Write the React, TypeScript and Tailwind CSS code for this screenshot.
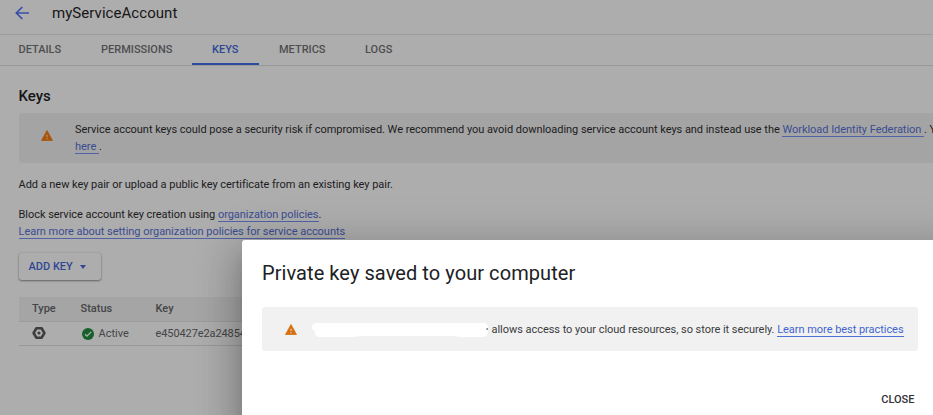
import React from "react";

const tabs = [
  { label: "DETAILS", box: "w-[82px] pl-[18.5px]" },
  { label: "PERMISSIONS", box: "w-[110px] pl-[19px]" },
  { label: "KEYS", box: "w-[67px] pl-[20px]", active: true },
  { label: "METRICS", box: "w-[86px] pl-[20px]" },
  { label: "LOGS", box: "w-[80px] pl-[20px]" },
];

function Warning({ className, mark }: { className: string; mark: string }) {
  return (
    <svg viewBox="1 2 22 19" preserveAspectRatio="none" className={`shrink-0 ${className}`}>
      <path fill="currentColor" stroke="currentColor" strokeLinejoin="round" d="M1.6 20.5h20.8L12 2.6z" />
      <path fill={mark} d="M11 16h2v2h-2zM11 10h2v4h-2z" />
    </svg>
  );
}

function Link({ children }: { children: React.ReactNode }) {
  return (
    <a className="inline-block h-[14px] border-b border-[#5063a8] leading-[14px] whitespace-pre text-[#3a4c92]">
      {children}
    </a>
  );
}

function Dialog() {
  return (
    <div className="absolute top-[240px] left-[242px] flex h-[200px] w-[720px] flex-col rounded-[3px] bg-white pl-[20px] shadow-[0_11px_15px_-7px_rgba(0,0,0,0.2),0_20px_38px_3px_rgba(0,0,0,0.16),0_9px_46px_8px_rgba(0,0,0,0.16)]">
      <h2 className="mt-[20px] h-[26px] text-[20px] leading-[26px] tracking-[0.07px] whitespace-nowrap text-[#202124]">
        Private key saved to your computer
      </h2>
      <div className="mt-[21px] flex h-[44px] w-[656px] items-center rounded-[3px] bg-[#f1f1f1] pl-[23px]">
        <Warning className="mt-[1px] h-[11px] w-[12px] text-[#d56e0c]" mark="#f5d6b8" />
        <svg viewBox="0 0 180 16" className="mt-[2px] ml-[14px] h-[16px] w-[180px] shrink-0">
          <path
            fill="#fff"
            d="M6 1H172Q177 1 177 6V11Q176 15 171 15H150Q146 15 145 14H49Q45 15 40 15H9Q4 15 4 11V9Q1 8 1 5Q1 1 6 1Z"
          />
          <path fill="#666" d="M175.5 6h1.2v2h-1.2z" />
        </svg>
        <p className="mt-[1px] ml-[0.5px] text-[11px] leading-[14px] tracking-[-0.04px] whitespace-nowrap text-[#3b3c3e]">
          allows access to your cloud resources, so store it securely.{" "}
          <a className="inline-block h-[14px] border-b border-[#4d70db] text-[#4165d0]">Learn more best practices</a>
        </p>
      </div>
      <div className="mt-[39px] flex h-[20px] w-[652.5px] items-center justify-end text-[11px] font-medium text-[#303134]">
        CLOSE
      </div>
    </div>
  );
}

export default function App() {
  return (
    <div className="relative h-[415px] w-[933px] overflow-hidden bg-[#adadad] font-['Roboto',sans-serif] text-[11px] text-[#1c1c1d]">
      <header className="flex h-[35px] items-start border-b border-[#9c9c9c] pl-[15px]">
        <svg viewBox="0 0 14 14" className="mt-[6px] h-[14px] w-[14px] text-[#3650a8]">
          <path fill="none" stroke="currentColor" strokeWidth="1.7" d="M14 7H1.5M7.3 1L1.3 7l6 6" />
        </svg>
        <h1 className="ml-[23px] h-[26px] text-[15px] leading-[27px] tracking-[0.05px] text-[#161617]">
          myServiceAccount
        </h1>
      </header>
      <nav className="flex h-[31px] border-b border-[#999] text-[11px] font-medium text-[#4d4e4f]">
        {tabs.map((tab) => (
          <div
            key={tab.label}
            className={`h-[30px] leading-[29px] ${tab.box} ${
              tab.active ? "border-b-2 border-[#2f4b9f] text-[#304796]" : ""
            }`}
          >
            {tab.label}
          </div>
        ))}
      </nav>
      <main className="w-[933px] pl-[18.5px]">
        <h2 className="mt-[20px] h-[20px] text-[15px] leading-[20px] font-medium text-[#151516]">Keys</h2>
        <div className="mt-[7px] flex h-[50px] w-[1000px] items-start rounded-[3px] bg-[#a4a4a4] pt-[8px]">
          <Warning className="mt-[8.5px] ml-[22.5px] h-[11px] w-[12px] text-[#a6550b]" mark="#c59a70" />
          <p className="ml-[22px] leading-[17px] tracking-[-0.037px] whitespace-nowrap">
            Service account keys could pose a security risk if compromised. We recommend you avoid downloading service
            account keys and instead use the <Link>{"Workload Identity Federation "}</Link>. Y
            <br />
            <Link>{"here "}</Link>.
          </p>
        </div>
        <p className="mt-[13px] leading-[17px] tracking-[-0.038px]">
          Add a new key pair or upload a public key certificate from an existing key pair.
        </p>
        <p className="mt-[13px] leading-[17px] tracking-[-0.036px]">
          Block service account key creation using <Link>organization policies</Link>.
          <br />
          <Link>Learn more about setting organization policies for service accounts</Link>
        </p>
        <button className="mt-[13px] flex h-[27px] w-[82px] items-center rounded-[3px] bg-[#adadad] pt-[1px] pl-[10px] text-[11px] font-medium text-[#304796] shadow-[0_1px_2px_rgba(0,0,0,0.4),0_0_2px_rgba(0,0,0,0.15)]">
          ADD KEY
          <span className="ml-[7px] border-x-[3.5px] border-t-[4px] border-x-transparent border-t-[#304796]" />
        </button>
        <div className="mt-[17px] w-[400px] text-[#444546]">
          <div className="flex h-[25px] items-center border-b border-[#9c9c9c] bg-[#a5a5a5] font-medium">
            <span className="w-[48px] pl-[13.5px]">Type</span>
            <span className="w-[89px] pl-[14px]">Status</span>
            <span>Key</span>
          </div>
          <div className="flex h-[24px] items-center border-b border-[#999]">
            <svg viewBox="0 0 14 14" className="mb-[1px] ml-[13.5px] h-[14px] w-[14px] shrink-0 text-[#3d3d3e]">
              <path
                fill="none"
                stroke="currentColor"
                strokeWidth="2.6"
                strokeLinejoin="round"
                d="M4.3 2.3h5.4L12.4 7l-2.7 4.7H4.3L1.6 7z"
              />
              <circle cx="7" cy="7" r="1.6" fill="currentColor" />
            </svg>
            <svg viewBox="0 0 12 12" className="ml-[36px] h-[12px] w-[12px] shrink-0">
              <circle cx="6" cy="6" r="6" fill="#185f2b" />
              <path fill="none" stroke="#a9b5ac" strokeWidth="1.3" d="M3 6.2l2 2L9.2 3.9" />
            </svg>
            <span className="w-[61.5px] shrink-0 pt-[1px] pl-[4.5px]">Active</span>
            <span className="pt-[1px] tracking-[-0.1px]">e450427e2a24854c</span>
          </div>
        </div>
      </main>
      <Dialog />
    </div>
  );
}
